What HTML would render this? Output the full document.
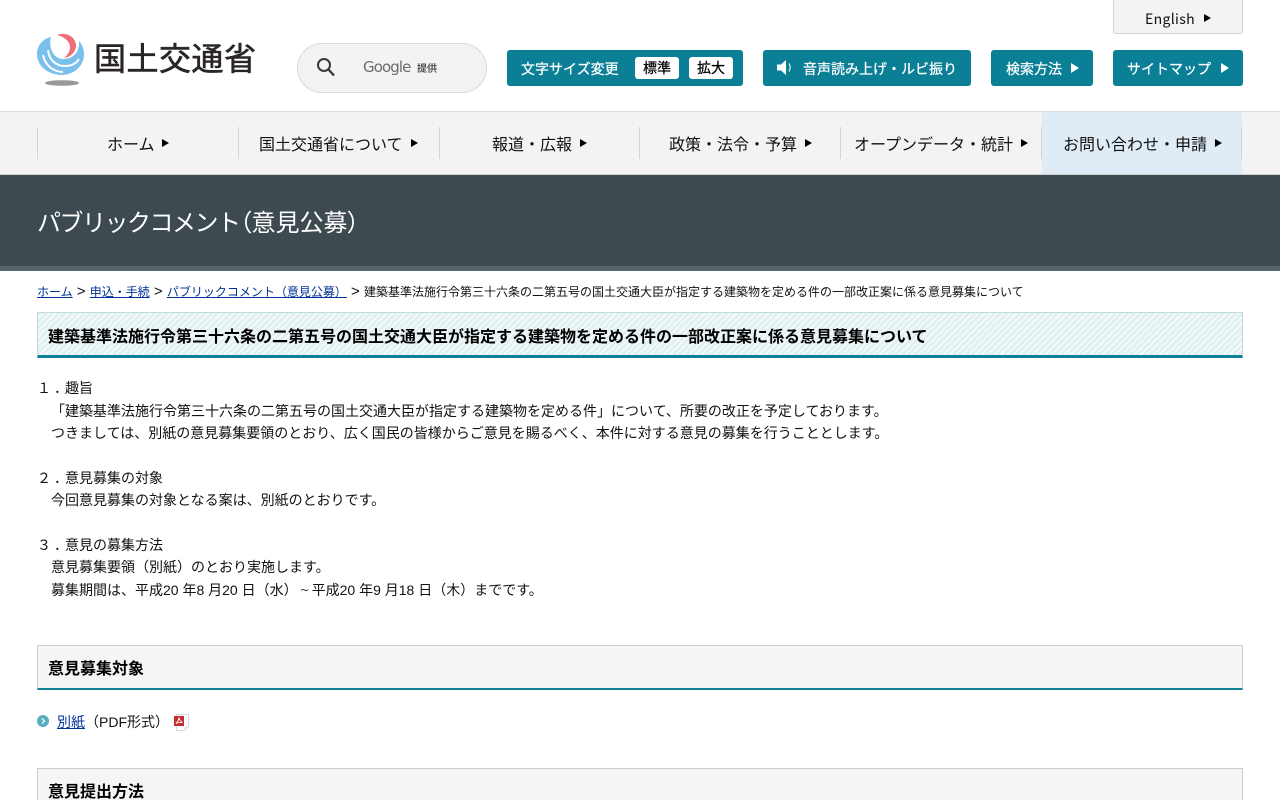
<!DOCTYPE html>
<html lang="ja"><head><meta charset="utf-8"><title>国土交通省</title>
<style>
html,body{margin:0;padding:0;background:#fff;height:800px;overflow:hidden}
#p{width:1280px;height:800px;overflow:hidden;position:relative;font-family:"Liberation Sans","Noto Sans CJK JP",sans-serif;font-size:14px;color:#000;text-spacing-trim:space-all}
.a{position:absolute;white-space:nowrap}
.btn{position:absolute;top:50px;height:36px;background:#0b7f96;border-radius:3px;color:#fff;font-size:14px;line-height:38px;white-space:nowrap;font-family:"Noto Sans CJK JP",sans-serif;-webkit-text-stroke:.25px #fff}
.tri{position:absolute;width:0;height:0;border-style:solid;border-color:transparent transparent transparent #000;border-width:4.5px 0 4.5px 7px}
.w{border-left-color:#fff}
.nav{position:absolute;top:128px;height:32px;line-height:30px;text-align:center;font-size:16px;font-family:"Noto Sans CJK JP",sans-serif;color:#111;white-space:nowrap}
.sep{position:absolute;top:127px;width:1px;height:32px;background:#d4d4d4}
.l{position:absolute;left:37px;white-space:nowrap;line-height:22.4px;color:#111}
a{color:#003399;text-decoration:underline}
.g{font-size:15px}
.d{position:relative;left:3px}
.t{display:inline-block;width:14px;text-align:center;font-family:"NanumGothic","Noto Sans CJK JP",sans-serif}
.wb{position:absolute;top:7px;width:44px;height:22px;background:#fff;border-radius:3px;color:#000;text-align:center;line-height:23px;font-size:14px;-webkit-text-stroke:.25px #000}
</style></head><body><div id="p">

<svg class="a" style="left:37px;top:33px" width="48" height="54" viewBox="0 0 48 54">
<path d="M14 4C5 6 0 13 0 21c0 11 9 20 24 21 13 0 23-9 23-21 0-5-2-10-5-13 1 10-5 18-16 18C17 26 11 15 14 4Z" fill="#79c0ec"/>
<path d="M11 17c1 9 7 16 17 16 6 0 11-2 14-7" fill="none" stroke="#fff" stroke-width="2"/>
<path d="M6 22c2 10 10 17 20 17" fill="none" stroke="#fff" stroke-width="2"/>
<path d="M20 2C27-1 38 2 39 12c0 7-5 12-12 13 4-3 6-7 6-11 0-5-5-10-13-12Z" fill="#ee6f78"/>
<ellipse cx="25" cy="50" rx="17" ry="2.800" fill="#999"/>
</svg>
<div class="a" style="left:94px;top:38px;font-size:32px;line-height:38px;color:#2a2526;font-family:'Noto Sans CJK JP',sans-serif;letter-spacing:.5px;-webkit-text-stroke:.6px #2a2526">国土交通省</div>

<div class="a" style="left:297px;top:43px;width:188px;height:48px;border:1px solid #d8d8d8;border-radius:25px;background:#f3f3f3"></div>
<svg class="a" style="left:316px;top:57px" width="20" height="21" viewBox="0 0 20 21"><circle cx="8" cy="8" r="6" fill="none" stroke="#3a3a3a" stroke-width="2"/><path d="M12.500 12.500L18 18.500" stroke="#3a3a3a" stroke-width="2.400"/></svg>
<div class="a" style="left:363px;top:57px;font-size:15px;line-height:20px;color:#6b6b6b;font-family:'DejaVu Sans',sans-serif;letter-spacing:-.9px">Google</div>
<div class="a" style="left:417px;top:61px;font-size:10px;line-height:14px;color:#555;font-family:'Noto Sans CJK JP',sans-serif;font-weight:bold">提供</div>

<div class="a" style="left:1113px;top:-4px;width:128px;height:36px;background:#f3f3f3;border:1px solid #d4d4d4;border-radius:3px"></div>
<div class="a" style="left:1145px;top:9px;font-size:14px;line-height:20px;color:#111;font-family:'Noto Sans CJK JP',sans-serif;letter-spacing:.35px">English</div>
<div class="tri" style="left:1204px;top:14px;border-width:4px 0 4px 7px"></div>

<div class="btn" style="left:507px;width:236px"><span class="a" style="left:14px">文字サイズ変更</span>
<span class="wb" style="left:128px">標準</span>
<span class="wb" style="left:182px">拡大</span></div>
<div class="btn" style="left:763px;width:208px"><svg class="a" style="left:13px;top:9px" width="20" height="17" viewBox="0 0 20 17"><path d="M1 5.500h4L10 1v15L5 11.500H1Z" fill="#fff"/><path d="M13 4.500c1.500 2.500 1.500 5.500 0 8" fill="none" stroke="#fff"/></svg><span class="a" style="left:40px">音声読み上げ・ルビ振り</span></div>
<div class="btn" style="left:991px;width:102px"><span class="a" style="left:15px">検索方法</span><div class="tri w" style="left:80px;top:13px;border-width:5px 0 5px 8px"></div></div>
<div class="btn" style="left:1113px;width:130px"><span class="a" style="left:14px">サイトマップ</span><div class="tri w" style="left:108px;top:13px;border-width:5px 0 5px 8px"></div></div>

<div class="a" style="left:0;top:111px;width:1280px;height:64px;background:#f3f3f3;border-top:1px solid #dcdcdc;border-bottom:1px solid #d0d0d0;box-sizing:border-box"></div>
<div class="a" style="left:1042px;top:112px;width:200px;height:62px;background:#dfecf6"></div>
<div class="sep" style="left:37px"></div><div class="sep" style="left:238px"></div><div class="sep" style="left:439px"></div><div class="sep" style="left:639px"></div><div class="sep" style="left:840px"></div><div class="sep" style="left:1041px"></div><div class="sep" style="left:1241px"></div>
<div class="nav" style="left:107px">ホーム</div><div class="tri" style="left:162px;top:139px"></div>
<div class="nav" style="left:259px">国土交通省について</div><div class="tri" style="left:411px;top:139px"></div>
<div class="nav" style="left:492px">報道・広報</div><div class="tri" style="left:580px;top:139px"></div>
<div class="nav" style="left:669px">政策・法令・予算</div><div class="tri" style="left:805px;top:139px"></div>
<div class="nav" style="left:854px">オープンデータ・統計</div><div class="tri" style="left:1021px;top:139px"></div>
<div class="nav" style="left:1063px">お問い合わせ・申請</div><div class="tri" style="left:1215px;top:139px"></div>

<div class="a" style="left:0;top:175px;width:1280px;height:96px;background:#3d4a50;border-bottom:5px solid #56646b;box-sizing:border-box"></div>
<div class="a" style="left:37px;top:203px;font-size:24px;line-height:36px;color:#fff;font-family:'Noto Sans CJK JP',sans-serif"><span style="letter-spacing:-1.5px">パブリックコメント</span><span style="font-feature-settings:'palt'">（意見公募）</span></div>

<div class="a" style="left:37px;top:283px;font-size:12px;line-height:18px;color:#111"><a>ホーム</a><span class="g"> &gt; </span><a>申込・手続</a><span class="g"> &gt; </span><a>パブリックコメント（意見公募）</a><span class="g"> &gt; </span>建築基準法施行令第三十六条の二第五号の国土交通大臣が指定する建築物を定める件の一部改正案に係る意見募集について</div>

<div class="a" style="left:37px;top:312px;width:1206px;height:46px;box-sizing:border-box;border:1px solid #bfdde0;border-bottom:3px solid #0f8098;background:repeating-linear-gradient(135deg,#e1f1f2 0 3px,#f7fbfb 3px 4.5px)"></div>
<div class="a" style="left:48px;top:327px;font-size:16px;line-height:22px;font-weight:bold">建築基準法施行令第三十六条の二第五号の国土交通大臣が指定する建築物を定める件の一部改正案に係る意見募集について</div>

<div class="l" style="top:377px">１<span class="d">．</span>趣旨</div>
<div class="l" style="top:400px">　「建築基準法施行令第三十六条の二第五号の国土交通大臣が指定する建築物を定める件」について、所要の改正を予定しております。</div>
<div class="l" style="top:422px">　つきましては、別紙の意見募集要領のとおり、広く国民の皆様からご意見を賜るべく、本件に対する意見の募集を行うこととします。</div>
<div class="l" style="top:467px">２<span class="d">．</span>意見募集の対象</div>
<div class="l" style="top:489px">　今回意見募集の対象となる案は、別紙のとおりです。</div>
<div class="l" style="top:534px">３<span class="d">．</span>意見の募集方法</div>
<div class="l" style="top:556px">　意見募集要領（別紙）のとおり実施します。</div>
<div class="l" style="top:579px">　募集期間は、平成20 年8 月20 日（水）<span class="t">～</span>平成20 年9 月18 日（木）までです。</div>

<div class="a" style="left:37px;top:645px;width:1206px;height:45px;box-sizing:border-box;border:1px solid #ccc;border-bottom:2px solid #0f8098;background:#f5f5f5"></div>
<div class="a" style="left:48px;top:659px;font-size:16px;line-height:22px;font-weight:bold">意見募集対象</div>

<svg class="a" style="left:37px;top:715px" width="12" height="12" viewBox="0 0 12 12"><circle cx="6" cy="6" r="6" fill="#58aebd"/><path d="M5 3.500L7.500 6 5 8.500" fill="none" stroke="#fff" stroke-width="1.200"/></svg>
<div class="l" style="left:57px;top:711px"><a>別紙</a>（PDF形式）</div>
<svg class="a" style="left:174px;top:714px" width="16" height="18" viewBox="0 0 16 18"><path d="M2.500.5h12v12l-4 4h-8Z" fill="#fff" stroke="#d8d8d8"/><path d="M14.500 12.500h-4v4Z" fill="#e4e4e4"/><rect x="0" y="2" width="10" height="10" fill="#c22f2f"/><path d="M2 9.500C3.500 8 4.600 6 5 3.500c.4 2 1.500 4 3.500 5-2-.3-4.500 0-6.500 1Z" fill="none" stroke="#fff" stroke-width=".8"/></svg>

<div class="a" style="left:37px;top:768px;width:1206px;height:45px;box-sizing:border-box;border:1px solid #ccc;border-bottom:2px solid #0f8098;background:#f5f5f5"></div>
<div class="a" style="left:48px;top:782px;font-size:16px;line-height:22px;font-weight:bold">意見提出方法</div>
</div></body></html>
